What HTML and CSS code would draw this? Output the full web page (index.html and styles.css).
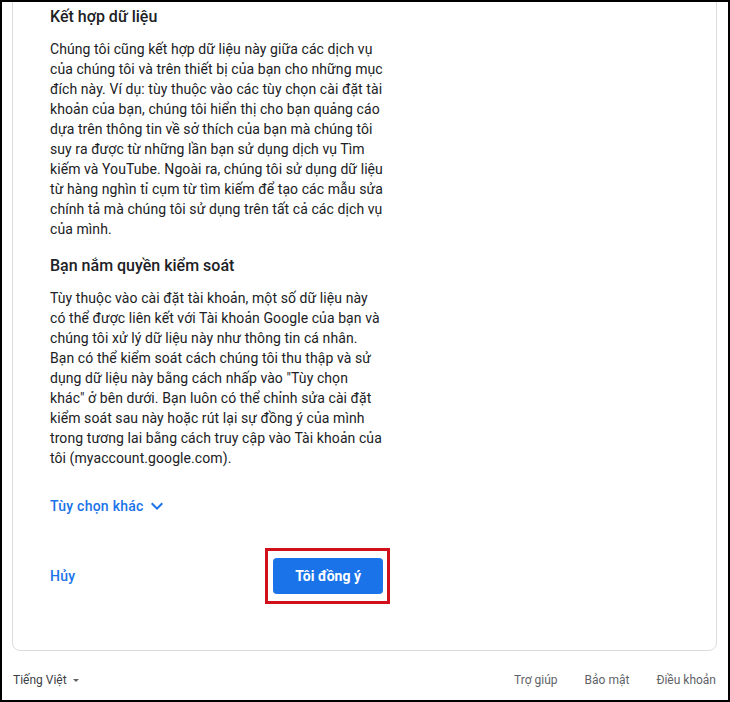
FILE: index.html
```html
<!DOCTYPE html>
<html lang="vi">
<head>
    <meta charset="UTF-8">
    <meta name="viewport" content="width=device-width, initial-scale=1.0">
    <title>Quyền riêng tư và điều khoản</title>
    <link rel="stylesheet" href="styles.css">
</head>
<body>
    <div class="page">
        <div class="card">
            <div class="card-content">
                <h2 class="section-title">Kết hợp dữ liệu</h2>
                <p class="section-text">Chúng tôi cũng kết hợp dữ liệu này giữa các dịch vụ của chúng tôi và trên thiết bị của bạn cho những mục đích này. Ví dụ: tùy thuộc vào các tùy chọn cài đặt tài khoản của bạn, chúng tôi hiển thị cho bạn quảng cáo dựa trên thông tin về sở thích của bạn mà chúng tôi suy ra được từ những lần bạn sử dụng dịch vụ Tìm kiếm và YouTube. Ngoài ra, chúng tôi sử dụng dữ liệu từ hàng nghìn tỉ cụm từ tìm kiếm để tạo các mẫu sửa chính tả mà chúng tôi sử dụng trên tất cả các dịch vụ của mình.</p>

                <h2 class="section-title">Bạn nắm quyền kiểm soát</h2>
                <p class="section-text">Tùy thuộc vào cài đặt tài khoản, một số dữ liệu này có thể được liên kết với Tài khoản Google của bạn và chúng tôi xử lý dữ liệu này như thông tin cá nhân. Bạn có thể kiểm soát cách chúng tôi thu thập và sử dụng dữ liệu này bằng cách nhấp vào "Tùy chọn khác" ở bên dưới. Bạn luôn có thể chỉnh sửa cài đặt kiểm soát sau này hoặc rút lại sự đồng ý của mình trong tương lai bằng cách truy cập vào Tài khoản của tôi (myaccount.google.com).</p>

                <a class="more-link" href="#">
                    Tùy chọn khác
                    <svg class="more-icon" width="24" height="24" viewBox="0 0 24 24">
                        <path d="M7.41 8.59 12 13.17l4.59-4.58L18 10l-6 6-6-6z" fill="#1a73e8"/>
                    </svg>
                </a>

                <div class="actions">
                    <a class="cancel-link" href="#">Hủy</a>
                    <span class="highlight">
                        <button class="agree-button">Tôi đồng ý</button>
                    </span>
                </div>
            </div>
        </div>

        <div class="footer">
            <div class="lang-select">
                Tiếng Việt
                <span class="lang-arrow"></span>
            </div>
            <div class="footer-links">
                <a href="#">Trợ giúp</a>
                <a href="#">Bảo mật</a>
                <a href="#">Điều khoản</a>
            </div>
        </div>
    </div>
</body>
</html>
```

FILE: styles.css
```css
* {
    box-sizing: border-box;
}

body {
    margin: 0;
    height: 702px;
    border: 2px solid #000;
    background: #fff;
    color: #202124;
    font-family: Roboto, "Noto Sans", Arial, sans-serif;
    overflow: hidden;
}

.page {
    height: 100%;
    display: flex;
    flex-direction: column;
    padding: 0 11px 0 10px;
}

.card {
    flex: 1;
    margin-top: -30px;
    border: 1px solid #dadce0;
    border-radius: 8px;
    padding: 32px 37px 0;
}

.card-content {
    width: 334px;
}

.section-title {
    margin: 0 0 10px;
    font-size: 16px;
    line-height: 24px;
    font-weight: 500;
    color: #202124;
}

.section-text {
    margin: 0 0 15px;
    font-size: 14px;
    line-height: 20px;
    letter-spacing: 0.08px;
    color: #202124;
}

.more-link {
    display: inline-flex;
    align-items: center;
    margin-top: 11px;
    font-size: 14px;
    line-height: 20px;
    font-weight: 500;
    color: #1a73e8;
    text-decoration: none;
    letter-spacing: 0.25px;
}

.more-icon {
    margin-left: 1px;
}

.actions {
    display: flex;
    justify-content: space-between;
    align-items: center;
    margin-top: 30px;
}

.cancel-link {
    font-size: 14px;
    font-weight: 500;
    color: #1a73e8;
    text-decoration: none;
    letter-spacing: 0.25px;
}

.highlight {
    display: inline-flex;
    border: 3px solid #d0101a;
    padding: 7px 4px 7px 5px;
    margin-right: -6px;
}

.agree-button {
    height: 36px;
    padding: 0 22px;
    border: none;
    border-radius: 4px;
    background: #1a73e8;
    color: #fff;
    font-family: Roboto, Arial, sans-serif;
    font-size: 14px;
    font-weight: 700;
    cursor: pointer;
}

.footer {
    height: 49px;
    flex-shrink: 0;
    display: flex;
    justify-content: space-between;
    align-items: flex-start;
    padding: 21px 1px 0 1px;
    font-size: 12px;
    line-height: 16px;
}

.lang-select {
    display: flex;
    align-items: center;
    color: #3c4043;
}

.lang-arrow {
    margin-left: 6px;
    border-left: 3.5px solid transparent;
    border-right: 3.5px solid transparent;
    border-top: 3.5px solid #5f6368;
}

.footer-links {
    display: flex;
    gap: 27px;
}

.footer-links a {
    color: #5f6368;
    text-decoration: none;
}
```
